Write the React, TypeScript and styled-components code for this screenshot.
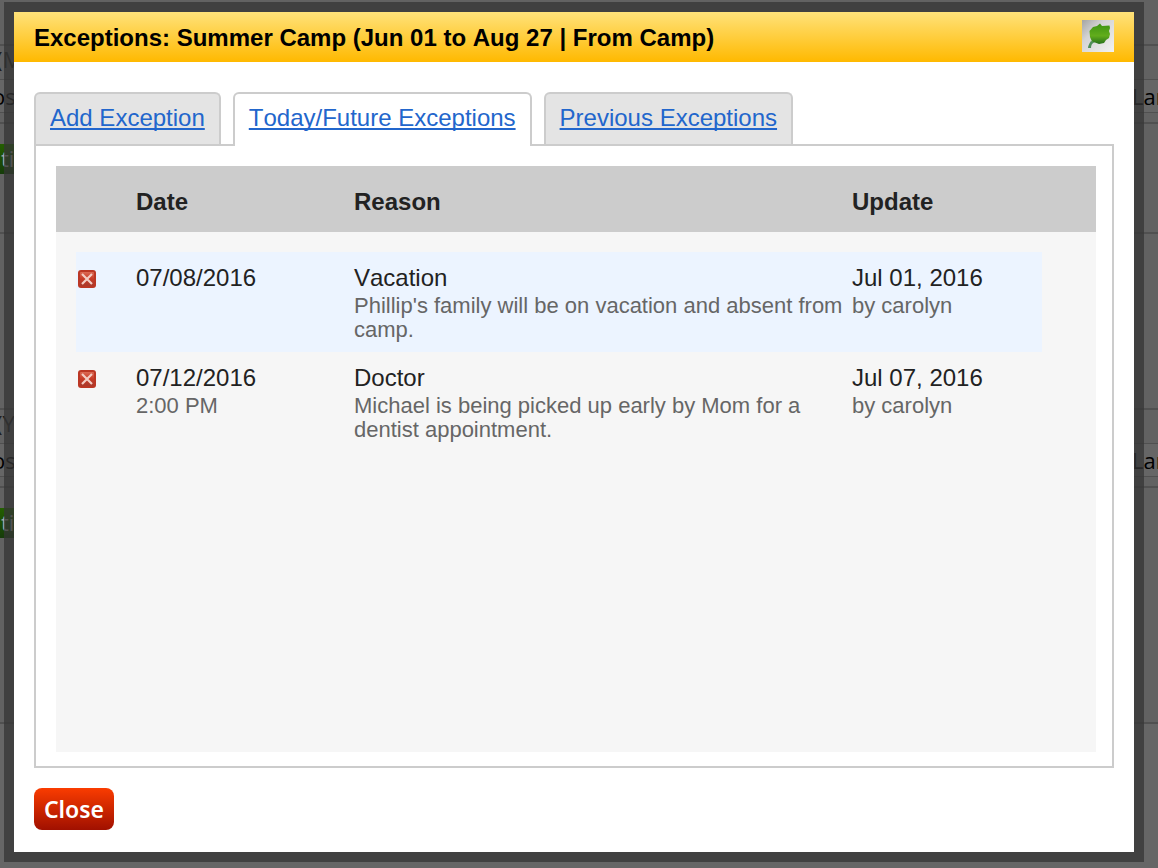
import React from "react";
import styled, { createGlobalStyle } from "styled-components";

const GlobalStyle = createGlobalStyle`
  *, *::before, *::after { box-sizing: border-box; }
  html, body { margin: 0; background: #666; }
  body {
    overflow: hidden;
    font-family: "Liberation Sans", Arial, sans-serif;
    font-size: 24px;
    font-kerning: none;
    color: #222;
  }
`;

const Screen = styled.div`
  position: relative;
  min-height: 100vh;
  overflow: hidden;
`;

/* Dimmed page behind the dialog */
const Backdrop = styled.div`
  position: absolute;
  inset: 0;
  overflow: hidden;
  background: #666;
  color: #000;
  font-family: "Open Sans", sans-serif;
  font-size: 22px;
`;

const Band = styled.div<{ $h: number; $shade?: string; $line?: number }>`
  display: flex;
  align-items: center;
  justify-content: space-between;
  height: ${(p) => p.$h}px;
  background: ${(p) => p.$shade ?? "#626262"};
  border-bottom: ${(p) => p.$line ?? 2}px solid #505050;
  overflow: hidden;
  white-space: nowrap;
`;

const Faded = styled.span`
  margin-left: -4px;
  padding-bottom: 8px;
  color: #1c1c1c;
  line-height: 24px;
`;

const CutLeft = styled.span`
  margin-left: -8px;
`;

const CutRight = styled.span`
  width: 26px;
`;

const ButtonBand = styled(Band)`
  align-items: flex-start;
  padding-top: 20px;
`;

const GreenTag = styled.span`
  height: 30px;
  line-height: 28px;
  padding: 0 8px 0 1px;
  background: linear-gradient(#245f00, #163c0a);
  color: #aaa;
  font-size: 22px;
`;

const Frame = styled.div`
  position: relative;
  margin: 2px 14px 6px 4px;
  padding: 10px;
  background: rgba(54, 54, 54, 0.75);
`;

const Dialog = styled.section`
  background: #fff;
`;

const TitleBar = styled.header`
  display: flex;
  align-items: flex-start;
  justify-content: space-between;
  height: 50px;
  padding: 8px 20px 0;
  background: linear-gradient(#ffe27a, #ffb900);
`;

const Title = styled.h1`
  margin: 0;
  font-size: 24px;
  line-height: 36px;
  font-weight: bold;
  color: #000;
`;

const Content = styled.div`
  padding: 30px 20px 22px;
`;

const Tabs = styled.nav`
  display: flex;
  gap: 12px;
`;

const Tab = styled.a<{ $active?: boolean }>`
  position: relative;
  height: ${(p) => (p.$active ? 54 : 52)}px;
  margin-bottom: ${(p) => (p.$active ? -2 : 0)}px;
  padding: 10px 14px 0;
  border: 2px solid #ccc;
  border-bottom: 0;
  border-radius: 6px 6px 0 0;
  background: ${(p) => (p.$active ? "#fff" : "#e4e4e4")};
  color: #26c;
  line-height: 28px;
  white-space: nowrap;
  text-decoration: underline;
  text-decoration-thickness: 2px;
  text-underline-offset: 2px;
  text-decoration-skip-ink: none;
`;

const Panel = styled.div`
  padding: 20px 16px 14px 20px;
  border: 2px solid #ccc;
`;

const Table = styled.table`
  display: block;
  background: #f6f6f6;
  text-align: left;
`;

const Row = styled.tr<{ $tinted?: boolean }>`
  display: grid;
  grid-template-columns: 60px 218px 1fr 190px;
  background: ${(p) => (p.$tinted ? "#ecf4ff" : "transparent")};
`;

const Head = styled.thead`
  display: block;
  padding: 22px 54px 16px 20px;
  background: #ccc;
`;

const HeadCell = styled.th`
  padding: 0;
  font-weight: bold;
  line-height: 28px;
`;

const Body = styled.tbody`
  display: block;
  min-height: 520px;
  padding: 20px 54px 20px 20px;
`;

const Cell = styled.td`
  padding: 12px 4px 10px 0;
`;

const Main = styled.div`
  padding-bottom: 2px;
  line-height: 28px;
`;

const Detail = styled.div`
  font-size: 22px;
  line-height: 24px;
  color: #666;
`;

const DeleteButton = styled.button`
  display: block;
  width: 18px;
  height: 18px;
  margin: 6px 0 0 2px;
  padding: 0;
  border: 0;
  background: none;
  cursor: pointer;
`;

const CloseButton = styled.button`
  display: block;
  width: 80px;
  height: 42px;
  margin-top: 20px;
  padding: 0;
  border: 0;
  border-radius: 8px;
  background: linear-gradient(#fa3c00, #a01000);
  color: #fff;
  font-family: "Noto Sans", sans-serif;
  font-size: 23px;
  font-weight: 600;
  cursor: pointer;
`;

const LeafIcon = () => (
  <svg width="32" height="32" viewBox="0 0 32 32" aria-hidden="true">
    <defs>
      <linearGradient id="tile" x1="0" y1="0" x2="1" y2="1">
        <stop offset="0" stopColor="#a4a4a4" />
        <stop offset="0.35" stopColor="#d4d4d4" />
        <stop offset="1" stopColor="#f2f2f2" />
      </linearGradient>
      <linearGradient id="leaf" x1="0" y1="0" x2="0" y2="1">
        <stop offset="0" stopColor="#3d9412" />
        <stop offset="0.6" stopColor="#62ad1c" />
        <stop offset="1" stopColor="#27701c" />
      </linearGradient>
    </defs>
    <rect width="32" height="32" fill="url(#tile)" />
    <path d="M9 21C7 24 6 26 6 28H9C9 25 10 23 13 22Z" fill="#4f8f5a" />
    <path
      d="M18 3.500L20 6L27.500 5.500L28 8L27 11L28 14L27 18L24 20L22 23L17 24L13 22.500L10 21.500L8 17L7.500 11L11 7L15 6Z"
      fill="url(#leaf)"
    />
  </svg>
);

const CrossIcon = () => (
  <svg width="18" height="18" viewBox="0 0 18 18" aria-hidden="true">
    <defs>
      <linearGradient id="cross" x1="0" y1="0" x2="0" y2="1">
        <stop offset="0" stopColor="#dc6a54" />
        <stop offset="0.5" stopColor="#c63a25" />
        <stop offset="1" stopColor="#a93a2c" />
      </linearGradient>
    </defs>
    <rect width="18" height="18" rx="3" fill="#bb3724" />
    <rect x="2" y="2" width="14" height="14" rx="1" fill="url(#cross)" />
    <path d="M4 4L14 14M14 4L4 14" stroke="#f3cdc4" strokeWidth="2.200" />
  </svg>
);

const rows = [
  {
    date: "07/08/2016",
    time: "",
    reason: "Vacation",
    note: "Phillip's family will be on vacation and absent from camp.",
    updated: "Jul 01, 2016",
    by: "by carolyn",
  },
  {
    date: "07/12/2016",
    time: "2:00 PM",
    reason: "Doctor",
    note: "Michael is being picked up early by Mom for a dentist appointment.",
    updated: "Jul 07, 2016",
    by: "by carolyn",
  },
];

const Group = ({ label, top, bottom }: { label: string; top: number; bottom: number }) => (
  <>
    <Band $h={top} />
    <Band $h={34} $line={1}>
      <Faded>{label}</Faded>
    </Band>
    <Band $h={33} $line={1} $shade="#666">
      <CutLeft>os</CutLeft>
      <CutRight>Lan</CutRight>
    </Band>
    <Band $h={11} />
    <ButtonBand $h={bottom}>
      <GreenTag>ti</GreenTag>
    </ButtonBand>
  </>
);

export default function App() {
  return (
    <Screen>
      <GlobalStyle />
      <Backdrop aria-hidden="true">
        <Group label="(M" top={46} bottom={110} />
        <Group label="(Y" top={176} bottom={236} />
      </Backdrop>
      <Frame>
        <Dialog role="dialog" aria-labelledby="dialog-title">
          <TitleBar>
            <Title id="dialog-title">Exceptions: Summer Camp (Jun 01 to Aug 27 | From Camp)</Title>
            <LeafIcon />
          </TitleBar>
          <Content>
            <Tabs>
              <Tab href="#add">Add Exception</Tab>
              <Tab href="#future" $active aria-current="page">
                Today/Future Exceptions
              </Tab>
              <Tab href="#previous">Previous Exceptions</Tab>
            </Tabs>
            <Panel>
              <Table>
                <Head>
                  <Row>
                    <HeadCell aria-label="Delete" />
                    <HeadCell>Date</HeadCell>
                    <HeadCell>Reason</HeadCell>
                    <HeadCell>Update</HeadCell>
                  </Row>
                </Head>
                <Body>
                  {rows.map((r, i) => (
                    <Row key={r.date} $tinted={i % 2 === 0}>
                      <Cell>
                        <DeleteButton type="button" aria-label={`Delete ${r.reason}`}>
                          <CrossIcon />
                        </DeleteButton>
                      </Cell>
                      <Cell>
                        <Main>{r.date}</Main>
                        {r.time && <Detail>{r.time}</Detail>}
                      </Cell>
                      <Cell>
                        <Main>{r.reason}</Main>
                        <Detail>{r.note}</Detail>
                      </Cell>
                      <Cell>
                        <Main>{r.updated}</Main>
                        <Detail>{r.by}</Detail>
                      </Cell>
                    </Row>
                  ))}
                </Body>
              </Table>
            </Panel>
            <CloseButton type="button">Close</CloseButton>
          </Content>
        </Dialog>
      </Frame>
    </Screen>
  );
}
